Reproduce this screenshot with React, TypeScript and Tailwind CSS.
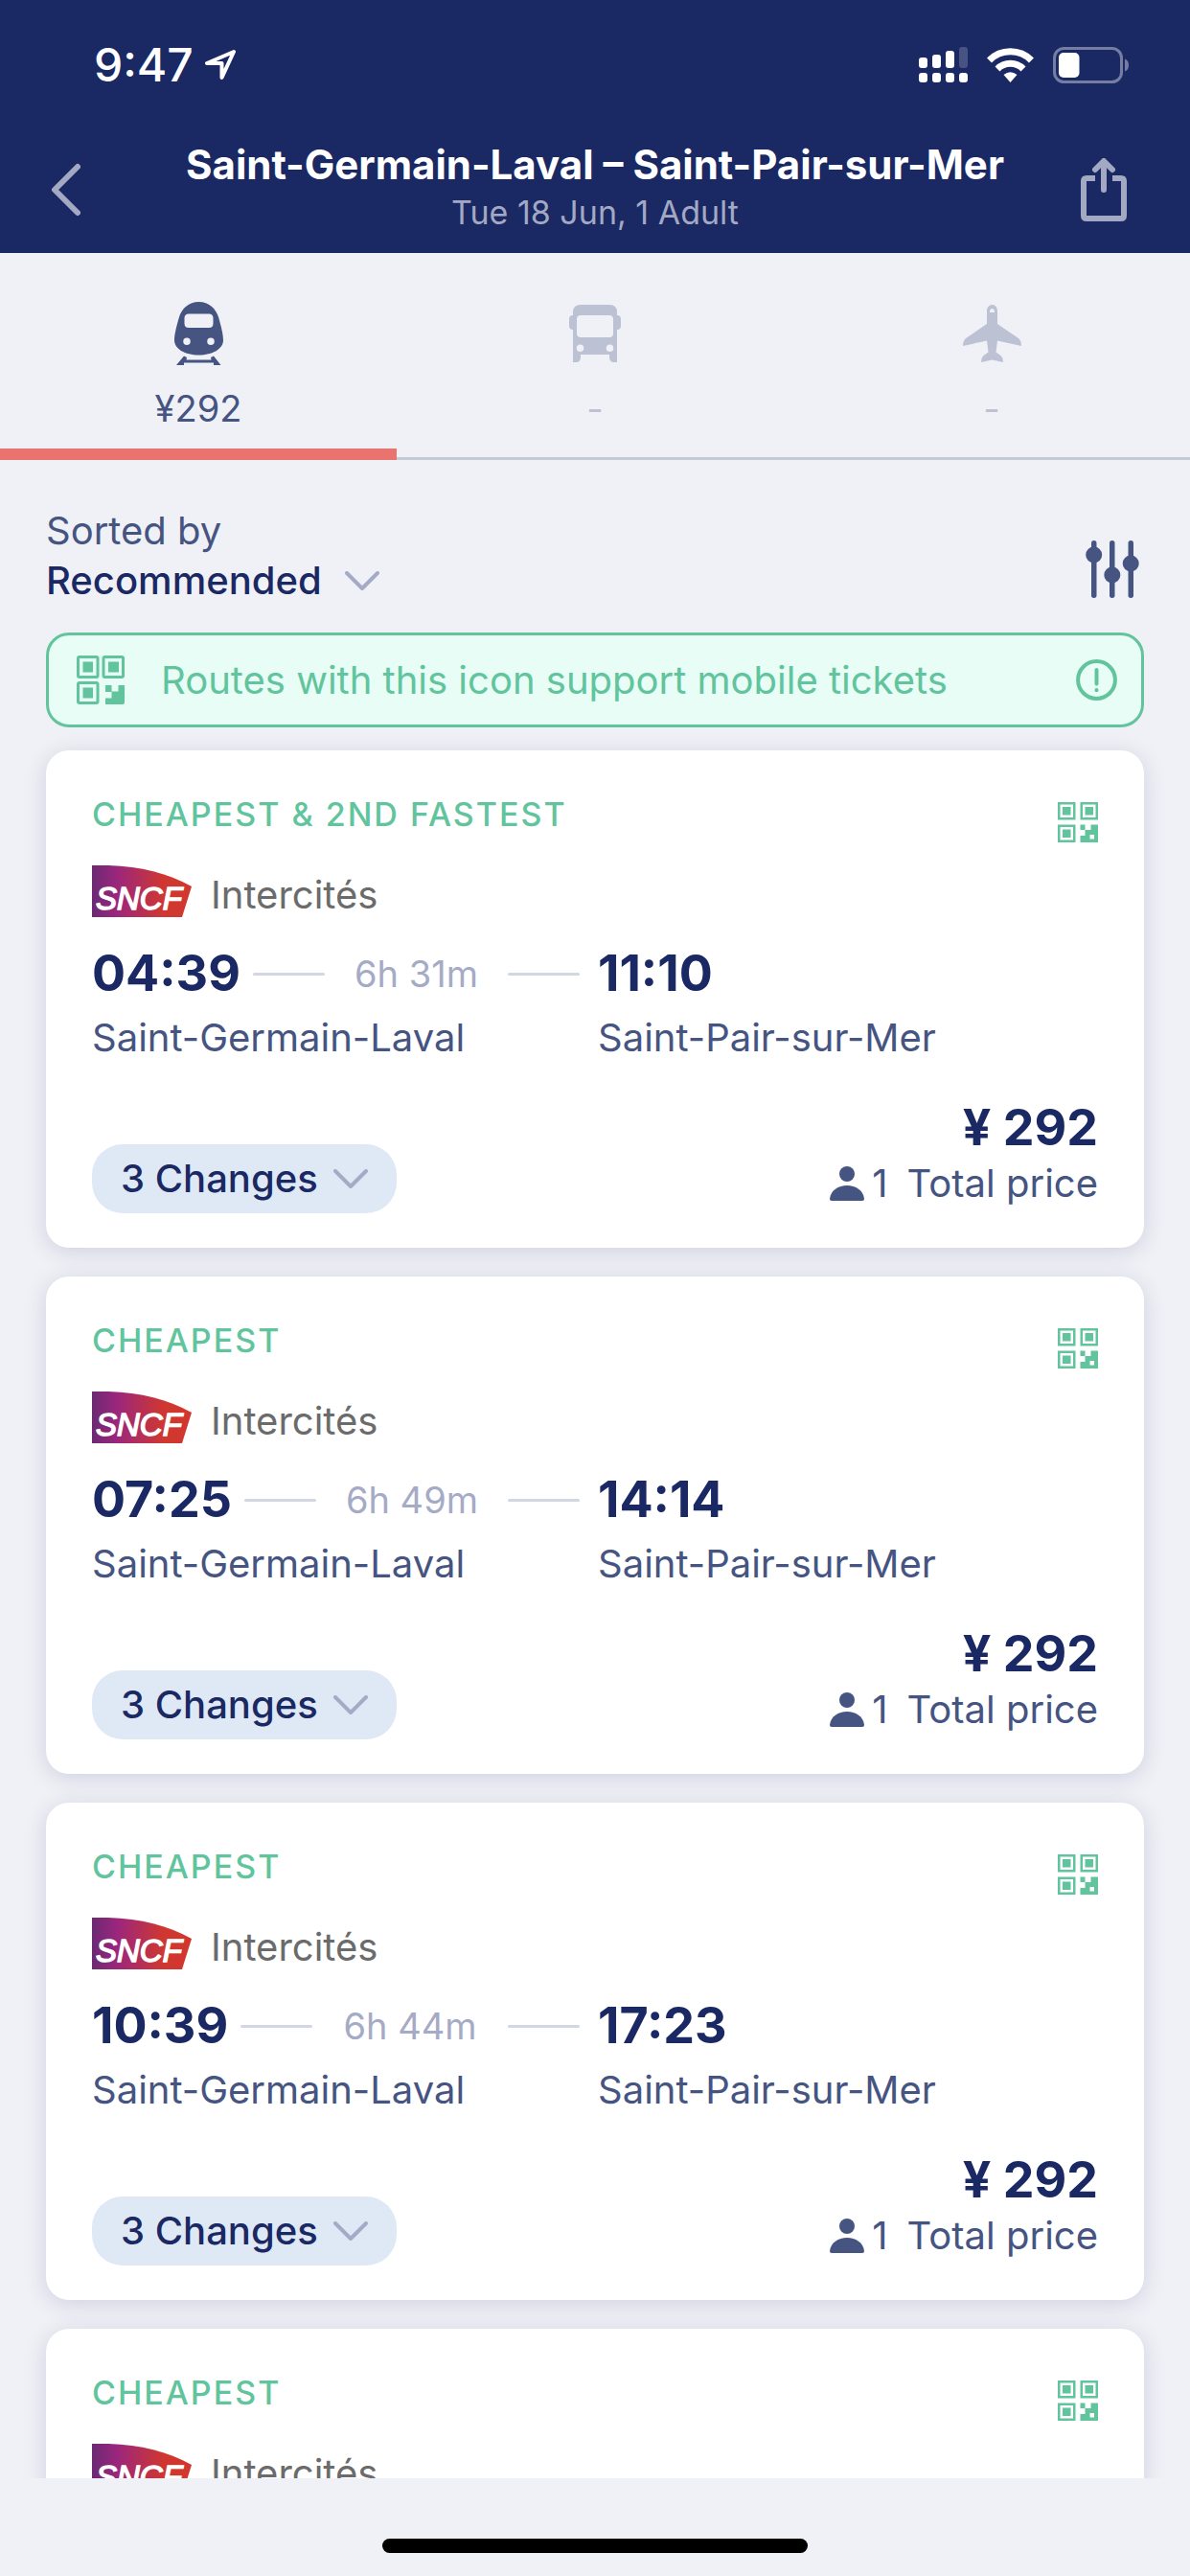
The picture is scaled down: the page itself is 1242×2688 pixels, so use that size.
import { useState } from "react";

interface Journey {
  id: number;
  label: string;
  times?: {
    departure: string;
    arrival: string;
    duration: string;
  };
}

const journeys: Journey[] = [
  { id: 1, label: "CHEAPEST & 2ND FASTEST", times: { departure: "04:39", arrival: "11:10", duration: "6h 31m" } },
  { id: 2, label: "CHEAPEST", times: { departure: "07:25", arrival: "14:14", duration: "6h 49m" } },
  { id: 3, label: "CHEAPEST", times: { departure: "10:39", arrival: "17:23", duration: "6h 44m" } },
  { id: 4, label: "CHEAPEST" }, // times not loaded yet
];

function ChevronDown() {
  return (
    <svg className="h-5 w-9 shrink-0" viewBox="0 0 36 20" fill="none" stroke="#a5abc6" strokeWidth="4" strokeLinecap="round" strokeLinejoin="round" aria-hidden="true">
      <path d="M2 2L18 18L34 2" />
    </svg>
  );
}

function TrainIcon() {
  return (
    <svg className="h-[66px] w-[51px]" viewBox="0 0 51 66" fill="currentColor" aria-hidden="true">
      <path
        fillRule="evenodd"
        d="M25.500 0C36 0 43.500 7 46.200 16.500C48.800 25.500 51 34 51 40C51 49 40 55.500 25.500 55.500C11 55.500 0 49 0 40C0 34 2.200 25.500 4.800 16.500C7.500 7 15 0 25.500 0ZM15 12.500Q10.500 12.500 10.500 17V22.500Q10.500 27 15 27H36Q40.500 27 40.500 22.500V17Q40.500 12.500 36 12.500ZM13 37.500A3.700 3.700 0 1 0 13 45A3.700 3.700 0 1 0 13 37.500ZM38 37.500A3.700 3.700 0 1 0 38 45A3.700 3.700 0 1 0 38 37.500Z"
      />
      <path d="M10 56.500L13 58L12.500 60.500H38.500L38 58L41 56.500L48.500 66H41V63.500H10V66H2Z" />
    </svg>
  );
}

function BusIcon() {
  return (
    <svg className="h-[60px] w-[54px]" viewBox="0 0 54 60" fill="currentColor" aria-hidden="true">
      <path
        fillRule="evenodd"
        d="M12 0H42Q50 0 50 8V11Q54 11 54 15V22Q54 26 50 26V60H47Q42 60 42 55V52H12V55Q12 60 7 60H4V26Q0 26 0 22V15Q0 11 4 11V8Q4 0 12 0ZM12 11Q8 11 8 15V30Q8 34 12 34H42Q46 34 46 30V15Q46 11 42 11ZM11.500 41.500A3.700 3.700 0 1 0 11.500 49A3.700 3.700 0 1 0 11.500 41.500ZM42.500 41.500A3.700 3.700 0 1 0 42.500 49A3.700 3.700 0 1 0 42.500 41.500Z"
      />
    </svg>
  );
}

function PlaneIcon() {
  return (
    <svg className="h-[60px] w-[61px]" viewBox="0 0 61 60" fill="currentColor" aria-hidden="true">
      <path
        fillRule="evenodd"
        d="M30.500 0C34 0 36 3 36 7V20L58 35Q61 37.500 61 43L36 37.500L34.500 49.500L40 53.500Q42 55.500 42 60L30.500 57.500L19 60Q19 55.500 21 53.500L26.500 49.500L25 37.500L0 43Q0 37.500 3 35L25 20V7C25 3 27 0 30.500 0ZM28 8H33Q33 4 30.500 4Q28 4 28 8Z"
      />
    </svg>
  );
}

function TicketIcon() {
  return (
    <svg className="h-[42px] w-[42px]" viewBox="0 0 42 42" role="img" aria-label="Mobile ticket">
      <g fill="none" stroke="#61c49d" strokeWidth="2.5">
        <path d="M1.250 1.250H17.250V17.250H1.250ZM24.750 1.250H40.750V17.250H24.750ZM1.250 24.750H17.250V40.750H1.250Z" />
      </g>
      <g fill="#61c49d">
        <path d="M5 5H13.500V13.500H5ZM28.500 5H37V13.500H28.500ZM5 28.500H13.500V37H5Z" />
        <path fillRule="evenodd" d="M23.500 23.500H28.500V29H34.500V23.500H42V42H23.500V35H28.500V29H23.500ZM33.500 34H38V38.500H33.500Z" />
      </g>
    </svg>
  );
}

function BannerTicketIcon() {
  return (
    <svg className="h-[51px] w-[50px] shrink-0" viewBox="0 0 50 51" aria-hidden="true">
      <g fill="none" stroke="#61c49d" strokeWidth="3">
        <rect x="1.500" y="1.500" width="20.500" height="21" rx="1.500" />
        <rect x="28" y="1.500" width="20.500" height="21" rx="1.500" />
        <rect x="1.500" y="28.500" width="20.500" height="21" rx="1.500" />
      </g>
      <g fill="#61c49d">
        <path d="M6.500 6.500H17V17.500H6.500ZM33 6.500H44V17.500H33ZM6.500 33.500H17V44.500H6.500Z" />
        <path d="M30 31H36.500V37.500H43.500V31H50V49Q50 51 48 51H30V44.500H36.500V38H30Z" />
      </g>
    </svg>
  );
}

function SncfLogo() {
  return (
    <svg className="h-[54px] w-[104px] shrink-0" viewBox="0 0 104 54" role="img" aria-label="SNCF">
      <defs>
        <linearGradient id="sncf" x1="0" y1="0" x2="1" y2="0">
          <stop offset="0" stopColor="#6b2a72" />
          <stop offset="0.25" stopColor="#9b267d" />
          <stop offset="0.72" stopColor="#cf3730" />
          <stop offset="1" stopColor="#d2372e" />
        </linearGradient>
      </defs>
      <path fill="url(#sncf)" d="M0 0H17C52 1 78 8 104 22L94 54H0Z" />
      <text x="4" y="46" fill="#ffffff" stroke="#ffffff" strokeWidth="1.5" fontFamily="Liberation Sans, Arial, sans-serif" fontSize="33" fontStyle="italic">
        SNCF
      </text>
    </svg>
  );
}

function StatusBar() {
  return (
    <div className="flex items-center justify-between pr-16 pl-[98px] text-white">
      <div className="flex items-center gap-3">
        <span className="text-[48px] leading-[48px] font-medium">9:47</span>
        <svg className="h-8 w-8" viewBox="0 0 32 32" fill="none" stroke="currentColor" strokeWidth="4" strokeLinejoin="round" aria-hidden="true">
          <path d="M30 2L2 14H17.500V29Z" />
        </svg>
      </div>
      <div className="flex items-center gap-5">
        <svg className="h-[38px] w-[51px]" viewBox="0 0 51 38" fill="currentColor" aria-hidden="true">
          <rect x="0" y="11" width="9" height="11" rx="3" />
          <rect x="14" y="8" width="9" height="14" rx="3" />
          <rect x="28" y="4" width="9" height="18" rx="3" />
          <rect x="42" y="0" width="9" height="22" rx="3" opacity="0.2" />
          <rect x="0" y="27" width="9" height="10" rx="3" />
          <rect x="14" y="27" width="9" height="10" rx="3" />
          <rect x="28" y="27" width="9" height="10" rx="3" />
          <rect x="42" y="27" width="9" height="10" rx="3" />
        </svg>
        <svg className="h-9 w-[49px]" viewBox="0 0 49 36" aria-hidden="true">
          <g fill="none" stroke="currentColor" strokeWidth="7">
            <path d="M2.500 13A31 31 0 0 1 46.500 13" />
            <path d="M11 22A19 19 0 0 1 38 22" />
          </g>
          <path fill="currentColor" d="M24.500 36L17.500 28Q24.500 22.500 31.500 28Z" />
        </svg>
        <svg className="h-[38px] w-[79px]" viewBox="0 0 79 38" aria-hidden="true">
          <rect x="1.500" y="1.500" width="70" height="35" rx="10" fill="none" stroke="#757ea2" strokeWidth="3" />
          <rect x="6" y="6" width="21.500" height="26" rx="5" fill="#ffffff" />
          <path d="M75 12.500Q79 14 79 19Q79 24 75 25.500Z" fill="#757ea2" />
        </svg>
      </div>
    </div>
  );
}

function JourneyCard({ journey }: { journey: Journey }) {
  const { label, times } = journey;

  return (
    <article className="min-h-[519px] shrink-0 rounded-3xl bg-white px-12 pt-12 pb-9 shadow-[0_4px_22px_rgba(40,50,110,0.17)]">
      <div className="flex h-9 items-start justify-between">
        <p className="text-[34px] leading-[38px] font-medium tracking-[2px] text-[#61c49d]">{label}</p>
        <div className="pt-1.5">
          <TicketIcon />
        </div>
      </div>

      <div className="mt-9 flex items-end gap-5">
        <SncfLogo />
        <p className="text-[40px] leading-[46px] text-[#6b6b6b]">Intercités</p>
      </div>

      {times && (
        <>
          <div className="mt-8 grid grid-cols-2 gap-x-[6px]">
            <div className="flex items-center gap-[13px] pr-[13px] leading-[54px]">
              <span className="text-[52px] font-bold text-[#1a2864]">{times.departure}</span>
              <span className="h-[3px] w-[75px] rounded-full bg-[#d3d6e3]" />
              <span className="flex-1 text-center text-[38px] whitespace-nowrap text-[#a5abc6]">{times.duration}</span>
              <span className="h-[3px] w-[75px] rounded-full bg-[#d3d6e3]" />
            </div>
            <span className="text-[52px] leading-[54px] font-bold text-[#1a2864]">{times.arrival}</span>
            <span className="mt-3.5 text-[40px] leading-[52px] text-[#465482]">Saint-Germain-Laval</span>
            <span className="mt-3.5 text-[40px] leading-[52px] text-[#465482]">Saint-Pair-sur-Mer</span>
          </div>

          <div className="mt-[38px] flex items-end justify-between">
            <button type="button" className="flex h-[72px] items-center gap-4 rounded-[32px] bg-[#dfe9f6] px-[30px] text-[40px] font-medium text-[#1a2864]">
              3 Changes
              <ChevronDown />
            </button>
            <div className="pb-1 text-right">
              <p className="text-[52px] leading-[60px] font-bold text-[#1a2864]">¥ 292</p>
              <p className="flex items-center justify-end text-[40px] leading-[55px] text-[#465482]">
                <svg className="mr-2 h-9 w-9" viewBox="0 0 36 36" fill="currentColor" aria-hidden="true">
                  <circle cx="18" cy="8" r="8" />
                  <path d="M0 34C1 25 9 20 18 20S35 25 36 34Q36 36 34 36H2Q0 36 0 34Z" />
                </svg>
                <span className="mr-5">1</span>
                <span>Total price</span>
              </p>
            </div>
          </div>
        </>
      )}
    </article>
  );
}

export default function App() {
  const [mode, setMode] = useState("train");

  const modes = [
    { id: "train", name: "Train", price: "¥292", icon: <TrainIcon /> },
    { id: "bus", name: "Bus", price: "-", icon: <BusIcon /> },
    { id: "plane", name: "Plane", price: "-", icon: <PlaneIcon /> },
  ];

  return (
    <div className="flex h-screen flex-col bg-[#f0f1f6] font-['Inter',sans-serif]">
      <header className="bg-[#1a2864] pt-11 pb-4">
        <StatusBar />
        <div className="mt-14 flex items-center justify-between pr-[66px] pl-[52px]">
          <button type="button" aria-label="Back" className="w-[62px]">
            <svg className="h-14 w-8" viewBox="0 0 32 56" fill="none" stroke="#a3a9c3" strokeWidth="6" strokeLinecap="round" strokeLinejoin="round" aria-hidden="true">
              <path d="M29 4L5 28L29 52" />
            </svg>
          </button>
          <div className="text-center">
            <h1 className="text-[42px] leading-[48px] font-bold text-white">Saint-Germain-Laval – Saint-Pair-sur-Mer</h1>
            <p className="text-[34px] leading-[52px] text-[#a3a9c3]">Tue 18 Jun, 1 Adult</p>
          </div>
          <button type="button" aria-label="Share">
            <svg className="h-[66px] w-12" viewBox="0 0 48 66" fill="none" stroke="#a3a9c3" strokeWidth="6" aria-hidden="true">
              <path d="M15 21H6Q3 21 3 24V60Q3 63 6 63H42Q45 63 45 60V24Q45 21 42 21H33" />
              <path d="M24 33V4M15 12L24 3L33 12" strokeLinecap="round" strokeLinejoin="round" />
            </svg>
          </button>
        </div>
      </header>

      <div role="tablist" className="grid grid-cols-3">
        {modes.map((item) => (
          <button
            key={item.id}
            type="button"
            role="tab"
            aria-label={item.name}
            aria-selected={mode === item.id}
            onClick={() => setMode(item.id)}
            className={`flex flex-col items-center pt-12 ${
              mode === item.id
                ? "border-b-[12px] border-[#e9736e] pb-4 text-[#465482]"
                : "border-b-[3px] border-[#c5cbd4] pb-[25px] text-[#bcc1d4]"
            }`}
          >
            <span className="flex h-[72px] items-center">{item.icon}</span>
            <span className="mt-4 text-[38px] leading-[52px]">{item.price}</span>
          </button>
        ))}
      </div>

      <main className="flex min-h-0 flex-1 flex-col overflow-hidden px-12 pt-12">
        <div className="flex items-end justify-between">
          <div>
            <label htmlFor="sort" className="block text-[40px] leading-[52px] text-[#465482]">
              Sorted by
            </label>
            <div className="flex items-center gap-6">
              <select id="sort" defaultValue="recommended" className="h-[52px] appearance-none bg-transparent text-[40px] leading-[52px] font-medium text-[#1a2864]">
                <option value="recommended">Recommended</option>
                <option value="price">Price</option>
              </select>
              <ChevronDown />
            </div>
          </div>
          <button type="button" aria-label="Filters" className="mr-1 mb-2">
            <svg className="h-[60px] w-[57px]" viewBox="0 0 57 60" fill="#465482" aria-hidden="true">
              <rect x="6" y="0" width="5.500" height="60" rx="2.700" />
              <rect x="25" y="0" width="5.500" height="60" rx="2.700" />
              <rect x="44.500" y="0" width="5.500" height="60" rx="2.700" />
              <circle cx="8.700" cy="15" r="8.500" />
              <circle cx="27.800" cy="36" r="8.500" />
              <circle cx="47.200" cy="24" r="8.500" />
            </svg>
          </button>
        </div>

        <div className="mt-7 flex h-[99px] shrink-0 items-center rounded-3xl border-[3px] border-[#61c49d] bg-[#e8fdf6] pr-[25px] pl-[29px]">
          <BannerTicketIcon />
          <p className="ml-[38px] flex-1 text-[40px] whitespace-nowrap text-[#61c49d]">Routes with this icon support mobile tickets</p>
          <svg className="h-[43px] w-[43px]" viewBox="0 0 43 43" fill="none" stroke="#61c49d" strokeWidth="4" strokeLinecap="round" aria-hidden="true">
            <circle cx="21.500" cy="21.500" r="19.400" />
            <path d="M21.500 11V25.500M21.500 32V32.200" />
          </svg>
        </div>

        <section className="mt-6 flex flex-col gap-[30px]">
          {journeys.map((journey) => (
            <JourneyCard key={journey.id} journey={journey} />
          ))}
        </section>
      </main>

      <footer className="z-10 flex h-[102px] shrink-0 items-end justify-center bg-[#f0f1f6] pb-6">
        <div className="h-[15px] w-[444px] rounded-full bg-black" />
      </footer>
    </div>
  );
}
